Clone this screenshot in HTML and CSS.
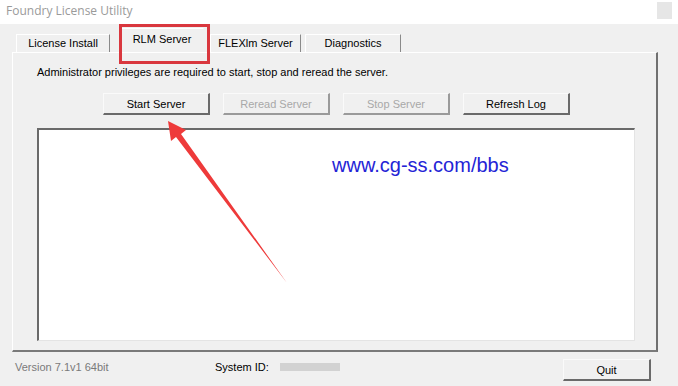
FILE: index.html
```html
<!DOCTYPE html>
<html lang="en">
  <head>
    <meta charset="UTF-8" />
    <title>Foundry License Utility</title>
    <link rel="stylesheet" href="styles.css">
  </head>
  <body>
    <div class="titlebar">
      <span class="title">Foundry License Utility</span>
      <span class="close"></span>
    </div>

    <div class="window">
      <div class="tabs">
        <div class="tab">License Install</div>
        <div class="tab active">RLM Server</div>
        <div class="tab">FLEXlm Server</div>
        <div class="tab">Diagnostics</div>
      </div>

      <div class="panel">
        <p class="note">Administrator privileges are required to start, stop and reread the server.</p>
        <div class="buttons">
          <button class="btn">Start Server</button>
          <button class="btn" disabled>Reread Server</button>
          <button class="btn" disabled>Stop Server</button>
          <button class="btn">Refresh Log</button>
        </div>
        <div class="log">
          <span class="watermark">www.cg-ss.com/bbs</span>
        </div>
      </div>

      <div class="footer">
        <span class="version">Version 7.1v1 64bit</span>
        <span class="sysid">System ID:</span>
        <span class="sysid-value"></span>
        <button class="btn quit">Quit</button>
      </div>
    </div>

    <svg class="arrow" width="678" height="386" viewBox="0 0 678 386">
      <polygon points="168,121 186,130 181,134 287,283 176,137 171,141" fill="#ee3a3a" />
    </svg>
  </body>
</html>
```

FILE: styles.css
```css
* {
  box-sizing: border-box;
}
body {
  margin: 0;
  width: 678px;
  height: 386px;
  background-color: #f0f0f0;
  font-family: "Liberation Sans", Arial, sans-serif;
  font-size: 11px;
  color: #000;
  overflow: hidden;
  position: relative;
}
.titlebar {
  height: 24px;
  background: white;
  display: flex;
  align-items: center;
  justify-content: space-between;
  padding: 0 6px;
}
.title {
  font-family: "Open Sans", sans-serif;
  font-size: 12px;
  color: #9a9a9a;
  margin-top: -4px;
}
.close {
  width: 15px;
  height: 17px;
  background: #e6e6e6;
  margin-top: -4px;
}
.window {
  padding: 0 20px 0 12px;
}
.tabs {
  display: flex;
  align-items: flex-end;
  height: 28px;
  padding-left: 4px;
}
.tab {
  height: 18px;
  line-height: 17px;
  white-space: nowrap;
  text-align: center;
  border-top: 1px solid #fff;
  border-left: 1px solid #fff;
  border-right: 1px solid #8a8a8a;
}
.tab:nth-child(1) { width: 94px; }
.tab:nth-child(3) { width: 91px; margin-left: 6px; }
.tab:nth-child(4) { width: 96px; margin-left: 4px; }
.tab.active {
  position: relative;
  width: 84px;
  height: 24px;
  line-height: 21px;
  margin-left: 10px;
  border-right-color: #f0f0f0;
}
.tab.active::after {
  content: "";
  position: absolute;
  left: -2px;
  top: -5px;
  width: 85px;
  height: 34px;
  border: 3px solid #d9373e;
}
.panel {
  height: 300px;
  border-top: 1px solid #fff;
  border-left: 1px solid #fff;
  border-right: 2px solid #707070;
  border-bottom: 2px solid #7a7a7a;
  padding: 0 21px 0 24px;
}
.note {
  margin: 12px 0 0 0;
  height: 15px;
  line-height: 15px;
}
.buttons {
  display: flex;
  gap: 13px;
  margin: 13px 0 0 66px;
}
.btn {
  width: 107px;
  height: 22px;
  font-family: inherit;
  font-size: 11px;
  background: #f0f0f0;
  border: 1px solid #fafafa;
  border-right: 2px solid #6a6a6a;
  border-bottom: 2px solid #6a6a6a;
  padding: 0;
  color: #000;
}
.btn:disabled {
  color: #a8a8a8;
  border-right-color: #9a9a9a;
  border-bottom-color: #9a9a9a;
}
.log {
  margin-top: 13px;
  height: 213px;
  background: white;
  border-top: 2px solid #6a6a6a;
  border-left: 2px solid #6a6a6a;
  border-right: 1px solid #e4e4e4;
  border-bottom: 1px solid #e4e4e4;
  padding: 24px 0 0 293px;
}
.watermark {
  font-size: 20px;
  color: #2424d6;
}
.footer {
  display: flex;
  align-items: center;
  height: 30px;
  padding-left: 3px;
}
.version {
  width: 200px;
  color: #7a7a7a;
}
.sysid {
  width: 65px;
}
.sysid-value {
  width: 60px;
  height: 8px;
  background: #d2d2d2;
}
.quit {
  width: 88px;
  margin: 6px 0 0 223px;
}
.arrow {
  position: absolute;
  left: 0;
  top: 0;
  pointer-events: none;
}
```
